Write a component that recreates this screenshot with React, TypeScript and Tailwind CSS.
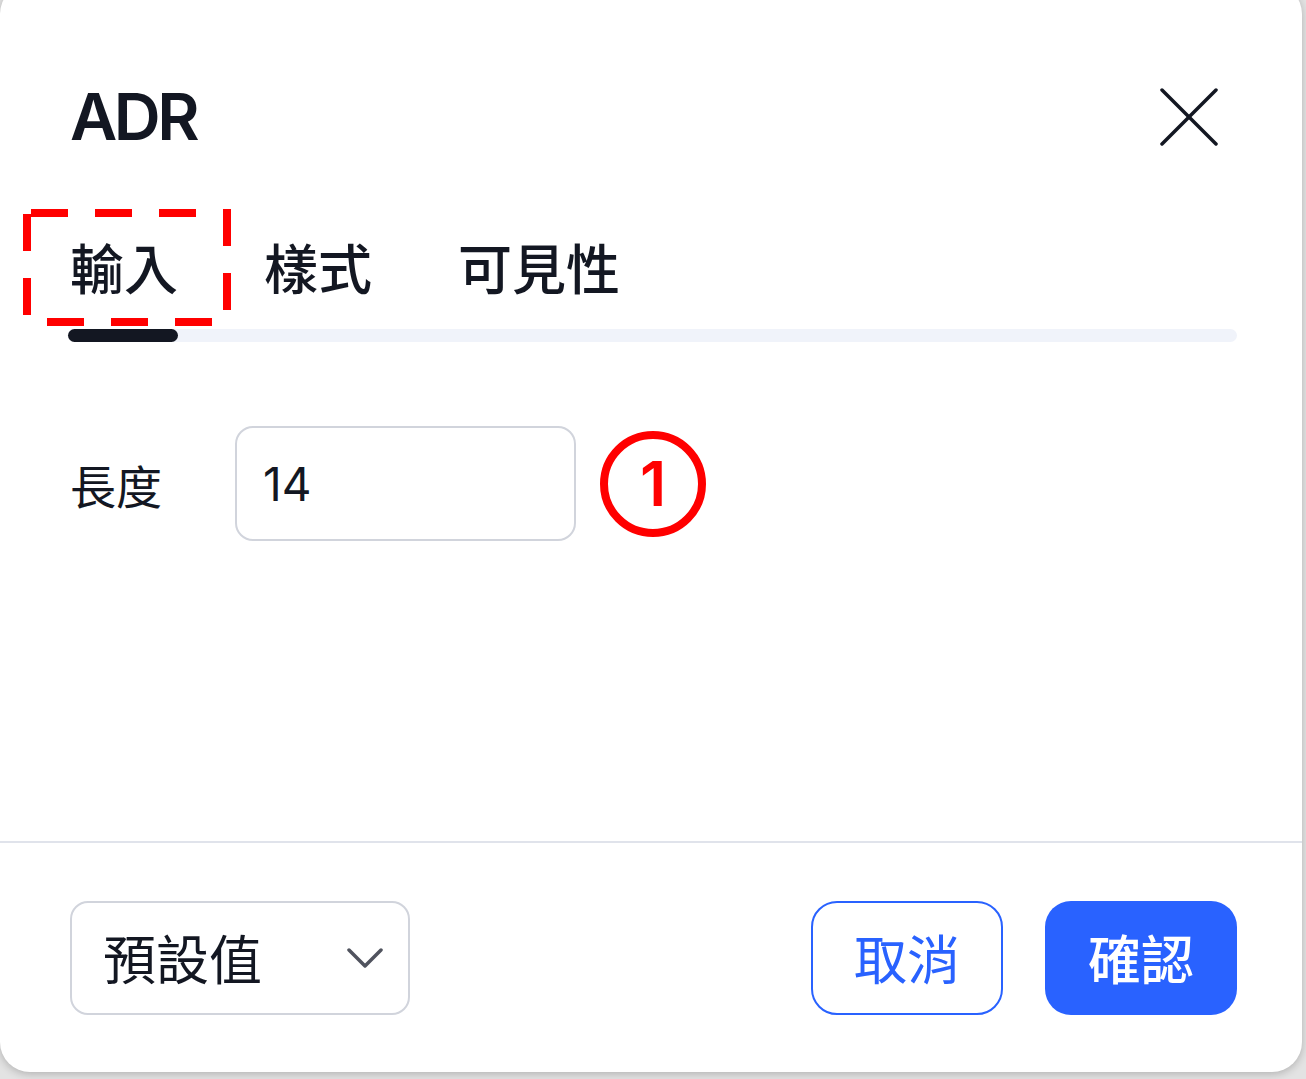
import React from "react";

const CJK = "font-['Noto_Sans_CJK_TC','Noto_Sans_CJK_SC',sans-serif]";
const LAT = "font-['Inter','Noto_Sans_CJK_TC',sans-serif]";

export default function App() {
  return (
    <div className="relative w-[1306px] h-[1079px] overflow-hidden bg-[#e3e3e3]">
      <div className="relative -mt-[16px] w-[1302px] h-[1088px] bg-white rounded-[30px] shadow-[0_2px_8px_rgba(0,0,0,0.22)] flex flex-col">
        {/* header */}
        <div className="pt-[100px] pl-[70px] pr-[84px] flex items-center justify-between">
          <h1 className={`${LAT} text-[65px] leading-none font-semibold tracking-[-3.5px] text-[#131722]`}>ADR</h1>
          <svg width="58" height="58" viewBox="0 0 58 58" fill="none" stroke="#131722" strokeWidth="3.5" strokeLinecap="round">
            <line x1="2" y1="2" x2="56" y2="56" />
            <line x1="56" y1="2" x2="2" y2="56" />
          </svg>
        </div>

        {/* tabs */}
        <div className={`${CJK} mt-[91px] pl-[70px] flex gap-[86px] text-[54px] leading-none font-medium text-[#131722]`}>
          <span>輸入</span>
          <span>樣式</span>
          <span>可見性</span>
        </div>
        <div className="relative mt-[35px] ml-[68px] w-[1169px] h-[13px] rounded-full bg-[#f0f3fa]">
          <div className="absolute left-0 top-0 w-[110px] h-[13px] rounded-full bg-[#131722]" />
        </div>

        {/* body */}
        <div className="mt-[84px] pl-[70px] flex items-center">
          <div className={`${CJK} w-[165px] text-[46px] leading-none text-[#131722]`}>長度</div>
          <div className="w-[341px] h-[115px] border-2 border-[#d1d4dc] rounded-[18px] pl-[26px] flex items-center">
            <span className={`${LAT} text-[46px] leading-none text-[#131722]`}>14</span>
          </div>
          <div className="ml-[24px] w-[106px] h-[106px] rounded-full border-[8px] border-[#ff0000] flex items-center justify-center">
            <span className={`${LAT} text-[62px] leading-none font-semibold text-[#ff0000]`}>1</span>
          </div>
        </div>

        <div className="flex-1" />

        {/* footer */}
        <div className="h-[231px] border-t-2 border-[#e0e3eb] pl-[70px] pr-[65px] flex items-center justify-between">
          <div className="w-[340px] h-[114px] border-2 border-[#d1d4dc] rounded-[18px] pl-[31px] pr-[25px] flex items-center justify-between">
            <span className={`${CJK} text-[53px] leading-none text-[#131722]`}>預設值</span>
            <svg width="36" height="20" viewBox="0 0 36 20" fill="none" stroke="#50535e" strokeWidth="3.5" strokeLinecap="round" strokeLinejoin="round">
              <polyline points="2,2 18,18 34,2" />
            </svg>
          </div>
          <div className="flex items-center gap-[42px]">
            <div className="w-[192px] h-[114px] border-2 border-[#2962ff] rounded-[26px] flex items-center justify-center">
              <span className={`${CJK} text-[53px] leading-none text-[#2962ff]`}>取消</span>
            </div>
            <div className="w-[192px] h-[114px] bg-[#2962ff] rounded-[26px] flex items-center justify-center">
              <span className={`${CJK} text-[53px] leading-none font-medium text-white`}>確認</span>
            </div>
          </div>
        </div>
      </div>

      {/* red dashed annotation */}
      <svg className="absolute left-[23px] top-[209px]" width="208" height="117" viewBox="0 0 208 117" fill="none">
        <rect x="4" y="4" width="200" height="109" stroke="#ff0000" strokeWidth="8" strokeDasharray="37 27" strokeDashoffset="-4" />
      </svg>
    </div>
  );
}
